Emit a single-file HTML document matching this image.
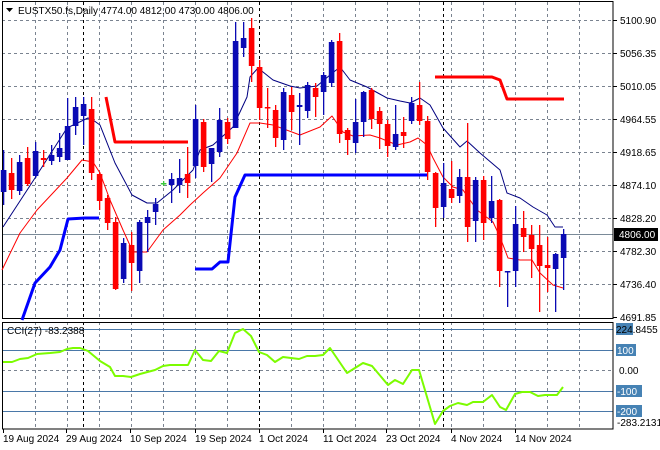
<!DOCTYPE html>
<html><head><meta charset="utf-8"><style>
html,body{margin:0;padding:0;background:#fff;width:660px;height:450px;overflow:hidden}
svg{display:block}
text{font-family:"Liberation Sans",sans-serif;font-size:10px;fill:#000}
</style></head><body>
<svg id="s" width="660" height="450" xmlns="http://www.w3.org/2000/svg">
<rect width="660" height="450" fill="#fff"/>
<g id="grid"></g>
<g id="lines"></g>
<g id="candles"></g>
<g id="ov"></g>
</svg>
<script>
var NS="http://www.w3.org/2000/svg";
function el(p,t,a,txt){var e=document.createElementNS(NS,t);for(var k in a)e.setAttribute(k,a[k]);if(txt!==undefined)e.textContent=txt;document.getElementById(p).appendChild(e);return e;}
// grid verticals
var vx=[35,67,99,131,163,195,227,291,323,355,387,419,451,483,515,547,579];
vx.forEach(function(x){
 el("grid","line",{x1:x+.5,y1:2,x2:x+.5,y2:318,stroke:"#7a8390","stroke-dasharray":"3,3"});
 el("grid","line",{x1:x+.5,y1:322,x2:x+.5,y2:429,stroke:"#7a8390","stroke-dasharray":"3,3"});
});
[83,259,443].forEach(function(x){
 el("grid","line",{x1:x+.5,y1:2,x2:x+.5,y2:318,stroke:"#000","stroke-dasharray":"3,3"});
 el("grid","line",{x1:x+.5,y1:322,x2:x+.5,y2:429,stroke:"#000","stroke-dasharray":"3,3"});
});
var hy=[20,53,86,119,152,185,218,251,284];
hy.forEach(function(y){el("grid","line",{x1:2,y1:y+.5,x2:613,y2:y+.5,stroke:"#7a8390","stroke-dasharray":"3,3"});});
el("grid","line",{x1:2,y1:234.5,x2:613,y2:234.5,stroke:"#7a8a98"});
// CCI levels
[329,350,391,411].forEach(function(y){el("grid","line",{x1:2,y1:y+.5,x2:613,y2:y+.5,stroke:"#4a78a8"});});
el("grid","line",{x1:2,y1:370.5,x2:613,y2:370.5,stroke:"#7a8390","stroke-dasharray":"3,3"});
// borders
el("grid","rect",{x:2.5,y:1.5,width:610.5,height:317,fill:"none",stroke:"#000"});
el("grid","rect",{x:2.5,y:322.5,width:610.5,height:106.5,fill:"none",stroke:"#000"});
function pl(pts,c,w){el("lines","polyline",{points:pts,fill:"none",stroke:c,"stroke-width":w,"stroke-linejoin":"round"});}
// MAs
pl("3,227 35,178 67,128 88,118 93,120 100,125 115,163 132,195 147,203 157,203 173,190 193,170 200,150 213,145 233,127 247,97 250,77 258,68 273,80 290,86 300,88 317,86 330,75 340,67 350,80 367,87 387,98 400,101 410,103 420,98 430,105 443,128 460,147 467,141 480,153 500,170 507,193 520,198 533,207 547,215 555,227 563,227","#000080",1);
pl("2,270 20,233 37,210 67,178 82,160 93,162 100,173 110,200 123,230 133,252 147,252 163,230 180,215 190,205 203,193 220,178 237,153 250,123 260,123 273,125 300,135 320,127 332,116 343,132 353,136 370,135 380,138 397,145 410,142 418,138 427,145 433,158 443,177 453,187 463,190 477,210 493,222 500,237 508,258 520,260 532,260 540,273 553,285 563,288","#ff0000",1);
pl("106,97 115,142 188,142","#ff0000",3);
pl("435,77 492,77 500,80 507,99 564,99","#ff0000",3);
pl("22,320 35,283 50,267 60,250 68,219 85,218 99,218","#0000ff",3);
pl("195,269 212,269 220,262 228,262 235,197 245,175 427,175","#0000ff",3);
// CCI
pl("3,362 12,362 20,359 28,358 37,354 50,353 60,352 67,349 73,348 80,348 88,351 100,361 110,367 115,376 123,376 131,377 140,374 155,370 163,366 170,365 178,365 188,365 195,350 203,360 211,361 219,351 227,353 235,333 243,329 251,336 259,352 267,355 275,362 283,357 291,358 299,359 307,356 315,356 323,355 330,348 347,373 363,363 372,366 388,385 395,380 403,384 412,370 419,370 435,424 443,411 450,406 458,403 467,405 473,402 483,402 492,395 500,407 506,410 515,394 522,392 530,392 538,396 545,395 557,395 563,387","#7cfc00",2);
// candles
var d=[
"b 150 170 192 205","r 158 173 190 199","b 155 162 191 195","r 147 158 184 186","b 142 151 176 178","r 150 158 160 167","b 145 155 161 165","b 133 148 157 162","b 98 126 160 160","b 97 107 126 135",
"b 97 104 116 145","r 97 109 173 180","r 172 174 201 210","r 195 198 223 230","r 217 222 289 290","b 238 243 279 283","r 232 245 263 291","b 220 222 271 283","b 210 217 223 252","b 198 204 212 225",
"g 181 183 184 186","b 173 179 185 203","b 159 178 185 193","r 147 174 183 198","b 105 119 166 178","r 119 122 167 172","b 148 148 164 182","b 108 120 152 157","r 118 122 139 144","b 22 41 128 128",
"b 22 38 48 57","r 18 28 66 82","r 60 67 108 120","r 88 107 108 128","r 105 110 138 147","b 88 92 140 150","r 87 95 112 130","b 93 105 107 145","b 82 85 111 118","r 83 88 97 117",
"b 72 75 92 115","b 40 42 83 87","r 33 41 134 143","r 128 130 140 155","b 99 122 143 153","b 91 92 122 137","r 88 90 119 129","r 107 111 124 149","r 120 124 146 157","b 105 134 147 150",
"r 117 132 136 148","b 97 103 121 124","r 82 105 121 125","r 116 121 172 180","r 172 173 208 227","b 163 183 207 218","r 161 189 198 203","b 169 177 196 203","r 123 177 227 242","b 177 180 221 242",
"r 176 180 223 240","b 176 201 218 223","r 199 200 271 287","b 271 271 272 307","b 206 224 271 287","r 211 228 237 252","r 225 235 249 278","r 225 245 266 312","r 237 265 268 292","b 253 254 269 312",
"b 229 234 258 290"];
d.forEach(function(s,i){var a=s.split(" "),c=a[0]=="b"?"#0a0ab4":(a[0]=="r"?"#ff0000":"#3cc83c");
 var x=Math.round(3.3+8*i),h=+a[1],t=+a[2],b=+a[3],l=+a[4];
 el("candles","rect",{x:x,y:h,width:1.3,height:l-h,fill:c});
 el("candles","rect",{x:x-2.2,y:t,width:5.6,height:Math.max(1.5,b-t),fill:c});
});
// title
el("ov","path",{d:"M6 8 L13 8 L9.5 12 Z",fill:"#000"});
el("ov","text",{x:18,y:14},"EUSTX50.fs,Daily  4774.00 4812.00 4730.00 4806.00");
// price axis
var pl2=[["5100.90",20],["5056.35",53],["5010.05",86],["4964.55",119],["4918.65",152],["4874.10",185],["4828.20",218],["4782.30",251],["4736.40",284],["4691.85",317]];
pl2.forEach(function(p){el("ov","line",{x1:613,y1:p[1]+.5,x2:617,y2:p[1]+.5,stroke:"#000"});el("ov","text",{x:620,y:p[1]+4},p[0]);});
el("ov","rect",{x:614,y:228,width:44,height:13,fill:"#000"});
el("ov","text",{x:619,y:238,style:"fill:#fff"},"4806.00");
// CCI axis
el("ov","rect",{x:616,y:323,width:17,height:12,fill:"#4682b4"});
el("ov","text",{x:616,y:333},"224.8455");
[["100",350],["-100",391],["-200",411]].forEach(function(p){var w=p[0].length*6+2;el("ov","rect",{x:616,y:p[1]-6,width:w,height:12,fill:"#4682b4"});el("ov","text",{x:617,y:p[1]+4,style:"fill:#fff"},p[0]);});
el("ov","text",{x:619,y:374},"0.00");
el("ov","text",{x:617,y:426},"-283.2131");
el("ov","text",{x:7,y:334},"CCI(27) -83.2388");
// dates
[["19 Aug 2024",3],["29 Aug 2024",66],["10 Sep 2024",130],["19 Sep 2024",195],["1 Oct 2024",259],["11 Oct 2024",323],["23 Oct 2024",386],["4 Nov 2024",451],["14 Nov 2024",515]].forEach(function(p){
 el("ov","line",{x1:p[1]+.5,y1:429,x2:p[1]+.5,y2:433,stroke:"#000"});
 el("ov","text",{x:p[1],y:442},p[0]);});
</script>
</body></html>
